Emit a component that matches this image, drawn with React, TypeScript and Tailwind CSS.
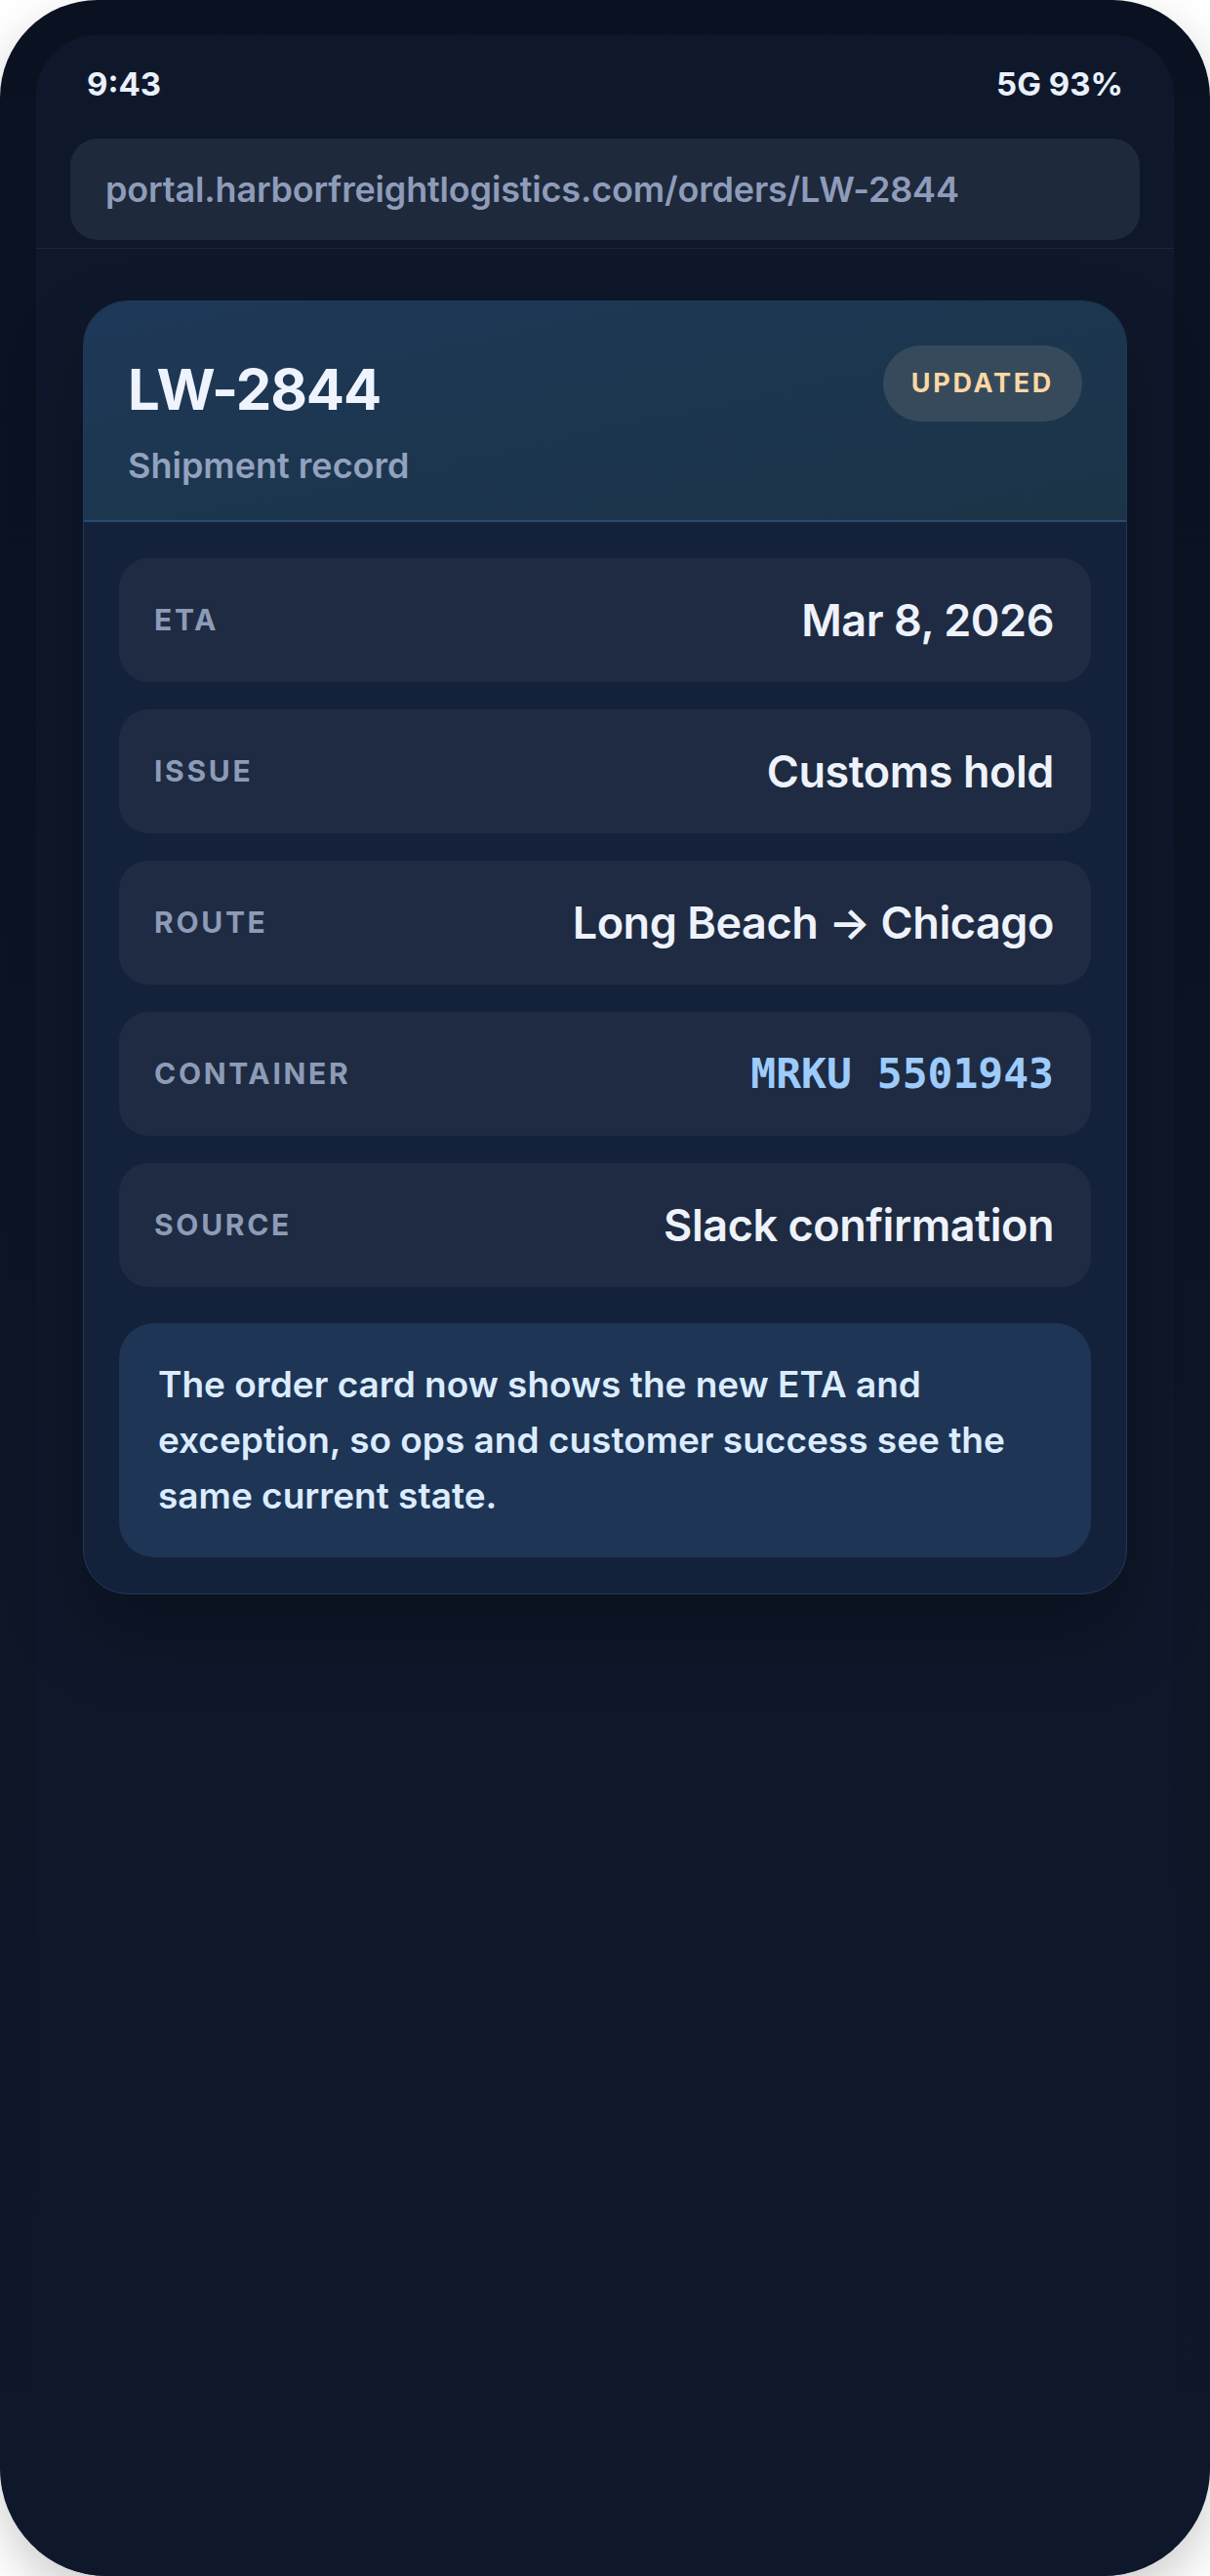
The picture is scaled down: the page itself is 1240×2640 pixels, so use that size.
const rows = [
  { label: "ETA", value: "Mar 8, 2026" },
  { label: "ISSUE", value: "Customs hold" },
  { label: "ROUTE", value: "Long Beach → Chicago" },
  { label: "CONTAINER", value: "MRKU 5501943", mono: true },
  { label: "SOURCE", value: "Slack confirmation" },
];

function FieldRow({ label, value, mono }: { label: string; value: string; mono?: boolean }) {
  return (
    <div className="flex h-[127px] items-center justify-between rounded-[30px] bg-[#1e2b42] pl-[36px] pr-[38px]">
      <span className="text-[30px] font-bold tracking-[0.09em] text-[#8d9bb7]">{label}</span>
      {mono ? (
        <span className="font-['DejaVu_Sans_Mono',monospace] text-[43px] font-bold text-[#9dcbfb]">{value}</span>
      ) : (
        <span className="text-[45px] font-semibold tracking-[-0.01em] text-[#eef2fb]">{value}</span>
      )}
    </div>
  );
}

export default function App() {
  return (
    <div className="min-h-[2640px] bg-white font-['Inter','Noto_Sans',sans-serif]">
      <div className="flex min-h-[2640px] flex-col overflow-hidden rounded-t-[100px] rounded-b-[110px] bg-gradient-to-b from-[#0a1120] via-[#0d1526] to-[#0f182b] px-[37px] pt-[36px] shadow-[0_20px_50px_rgba(0,0,0,0.2)]">
        <div className="flex flex-1 flex-col rounded-t-[62px] bg-[#0f182b]">
          {/* status bar */}
          <div className="flex h-[102px] items-center justify-between px-[52px] text-[33px] font-bold text-[#eaf0fb]">
            <span>9:43</span>
            <span>5G 93%</span>
          </div>

          {/* address bar */}
          <div className="mt-[4px] border-b border-[#1c2637] px-[35px] pb-[8px]">
            <div className="flex h-[104px] items-center rounded-[28px] bg-[#1e293b] px-[36px] text-[36px] font-semibold tracking-[-0.005em] text-[#8e9cba]">
              portal.harborfreightlogistics.com/orders/LW-2844
            </div>
          </div>

          {/* order card */}
          <div className="px-[48px] pt-[53px]">
            <div className="overflow-hidden rounded-[46px] border border-[#1f3a5a] bg-[#14213a] shadow-[0_40px_80px_rgba(0,0,0,0.3)]">
              <div className="flex items-start justify-between border-b-2 border-[#2b4a6e] bg-gradient-to-br from-[#1e3858] to-[#1b3447] pb-[36px] pl-[45px] pr-[45px] pt-[45px]">
                <div className="flex flex-col">
                  <h1 className="mt-[15px] text-[58px] font-bold leading-[60px] tracking-[-0.02em] text-[#eef3fd]">LW-2844</h1>
                  <p className="mt-[28px] text-[36px] font-semibold leading-[40px] text-[#93a2bf]">Shipment record</p>
                </div>
                <span className="flex h-[78px] items-center rounded-full bg-[#374a5b] px-[29px] text-[27px] font-bold tracking-[0.1em] text-[#fcd7a4]">
                  UPDATED
                </span>
              </div>

              <div className="flex flex-col gap-[28px] px-[36px] pb-[37px] pt-[37px]">
                {rows.map((r) => (
                  <FieldRow key={r.label} label={r.label} value={r.value} mono={r.mono} />
                ))}
                <div className="mt-[9px] rounded-[36px] bg-[#1e3555] px-[40px] pb-[35px] pt-[34px] text-[37px] font-semibold leading-[57px] text-[#dcecff]">
                  The order card now shows the new ETA and exception, so ops and customer success see the same current state.
                </div>
              </div>
            </div>
          </div>
        </div>
      </div>
    </div>
  );
}
